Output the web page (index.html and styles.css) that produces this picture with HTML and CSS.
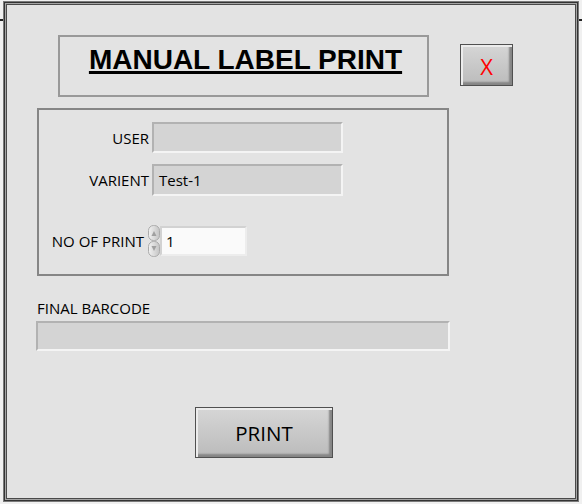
FILE: index.html
```html
<!DOCTYPE html>
<html>
<head>
<meta charset="utf-8">
<link rel="stylesheet" href="styles.css">
</head>
<body>
<div class="tick tick-left"></div>
<div class="tick tick-right"></div>
<div class="frame">
  <div class="header">
    <div class="title-box"><span class="title">MANUAL LABEL PRINT</span></div>
    <div class="btn btn-close">X</div>
  </div>
  <div class="group">
    <div class="row row-user">
      <div class="label">USER</div>
      <div class="field field-wide"></div>
    </div>
    <div class="row row-varient">
      <div class="label">VARIENT</div>
      <div class="field field-wide field-tall">Test-1</div>
    </div>
    <div class="row row-count">
      <div class="label label-count">NO OF PRINT</div>
      <svg class="spinner" width="12" height="32" viewBox="0 0 12 32">
        <defs>
          <linearGradient id="sg" x1="0" y1="0" x2="1" y2="0">
            <stop offset="0" stop-color="#f2f2f2"/>
            <stop offset="1" stop-color="#c4c4c4"/>
          </linearGradient>
        </defs>
        <rect x="0.5" y="0.5" width="11" height="15" rx="5" fill="url(#sg)" stroke="#ababab"/>
        <rect x="0.5" y="16.5" width="11" height="15" rx="5" fill="url(#sg)" stroke="#ababab"/>
        <path d="M3.5 11 L6 6 L8.5 11 Z" fill="#a0a0a0"/>
        <path d="M3.5 21 L6 26 L8.5 21 Z" fill="#a0a0a0"/>
      </svg>
      <div class="field field-num">1</div>
    </div>
  </div>
  <div class="barcode-label">FINAL BARCODE</div>
  <div class="field field-barcode"></div>
  <div class="btn btn-print">PRINT</div>
</div>
</body>
</html>
```
FILE: styles.css
```css
html, body {
  margin: 0;
  padding: 0;
}
body {
  width: 582px;
  height: 504px;
  background: #f0f0f0;
  position: relative;
  overflow: hidden;
  font-family: "Open Sans", "Noto Sans", sans-serif;
  color: #000;
}
.tick {
  position: absolute;
  top: 19px;
  height: 2px;
  background: #222;
}
.tick-left { left: 0; width: 3px; }
.tick-right { left: 578px; width: 4px; }

.frame {
  position: absolute;
  left: 3px;
  top: 1px;
  width: 576px;
  height: 501px;
  box-sizing: border-box;
  background: #e3e3e3;
  border: 1px solid #7a7a7a;
  box-shadow: inset 0 0 0 1px #333, inset 0 0 0 2px #a4a4a4, inset 0 0 0 3px #4a4a4a;
  display: flex;
  flex-direction: column;
  align-items: flex-start;
}

.header {
  display: flex;
  align-items: flex-start;
  margin: 33px 0 0 54px;
}
.title-box {
  width: 371px;
  height: 62px;
  box-sizing: border-box;
  border: 2px solid #999;
  display: flex;
  justify-content: center;
  padding-top: 9px;
  padding-left: 4px;
}
.title {
  font-family: "Liberation Sans", Arial, sans-serif;
  font-weight: bold;
  font-size: 28px;
  line-height: 28px;
  color: #000;
  text-decoration: underline;
  text-decoration-thickness: 3px;
  text-underline-offset: 2px;
}

.btn {
  box-sizing: border-box;
  border: 1px solid #505050;
  background: linear-gradient(#d6d6d6, #bbbbbb);
  box-shadow: inset 2px 2px 0 #ececec, inset -3px -3px 2px #858585;
  display: flex;
  align-items: center;
  justify-content: center;
}
.btn-close {
  width: 53px;
  height: 42px;
  margin: 9px 0 0 31px;
  color: #ff0000;
  font-family: "Open Sans", sans-serif;
  font-size: 22px;
  padding-top: 2px;
}
.btn-print {
  width: 138px;
  height: 51px;
  margin: 56px 0 0 191px;
  font-size: 20.5px;
  color: #000;
}

.group {
  margin: 11px 0 0 33px;
  width: 412px;
  height: 168px;
  box-sizing: border-box;
  border: 2px solid #868686;
}
.row {
  display: flex;
  align-items: center;
}
.row-user { margin-top: 12px; }
.row-varient { margin-top: 11px; }
.row-count { margin-top: 29px; }
.label {
  width: 110px;
  text-align: right;
  font-size: 15px;
  margin-right: 3px;
}
.label-count {
  width: 105px;
  margin-right: 4px;
}
.spinner { display: block; }

.field {
  box-sizing: border-box;
  background: #d4d4d4;
  border: 2px solid;
  border-color: #b2b2b2 #f4f4f4 #f4f4f4 #b2b2b2;
  font-size: 15px;
  display: flex;
  align-items: center;
  padding-left: 5px;
  color: #000;
}
.field-wide { width: 191px; height: 31px; }
.field-tall { height: 32px; }
.field-num {
  width: 87px;
  height: 30px;
  background: #fafafa;
  border-color: #d2d2d2 #ededed #ededed #d2d2d2;
  padding-left: 4px;
}

.barcode-label {
  margin: 22px 0 0 33px;
  font-size: 15px;
  line-height: 20px;
}
.field-barcode {
  margin: 3px 0 0 32px;
  width: 414px;
  height: 30px;
}
```
